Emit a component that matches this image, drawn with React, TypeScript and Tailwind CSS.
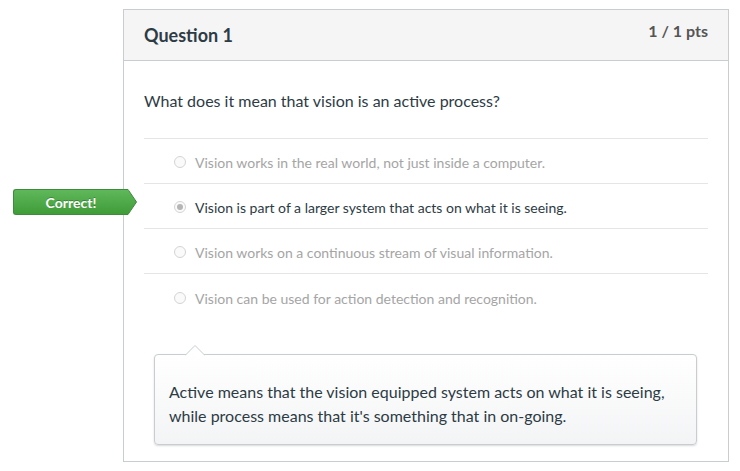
const answers = [
  { text: 'Vision works in the real world, not just inside a computer.', picked: false },
  { text: 'Vision is part of a larger system that acts on what it is seeing.', picked: true },
  { text: 'Vision works on a continuous stream of visual information.', picked: false },
  { text: 'Vision can be used for action detection and recognition.', picked: false },
]

function Radio({ checked }: { checked: boolean }) {
  return (
    <span className="flex h-[12px] w-[12px] shrink-0 items-center justify-center rounded-full border border-[#d4d4d4] bg-[#fafafa]">
      {checked && <span className="h-[6px] w-[6px] rounded-full bg-[#b5b5b5]" />}
    </span>
  )
}

function CorrectBadge() {
  return (
    <div className="absolute left-[-131px] top-[5px] flex h-[26px] items-center">
      <div className="flex h-full w-[115px] items-center justify-center rounded-l-[3px] border border-r-0 border-[#3d8b3d] bg-gradient-to-b from-[#5fb85a] to-[#3f9c38] text-[14px] font-bold text-white [text-shadow:0_-1px_0_rgba(0,0,0,0.25)]">
        Correct!
      </div>
      <svg width="10" height="26" viewBox="0 0 10 26" className="-ml-px">
        <defs>
          <linearGradient id="g" x1="0" y1="0" x2="0" y2="1">
            <stop offset="0" stopColor="#5fb85a" />
            <stop offset="1" stopColor="#3f9c38" />
          </linearGradient>
        </defs>
        <path d="M0 0.5 L1 0.5 L9.5 13 L1 25.5 L0 25.5 Z" fill="url(#g)" stroke="#3d8b3d" strokeWidth="1" />
        <rect x="0" y="1" width="1.5" height="24" fill="url(#g)" />
      </svg>
    </div>
  )
}

export default function App() {
  return (
    <div className="min-h-[471px] bg-white pl-[123px] pt-[9px] font-['Lato',sans-serif] text-[#2d3b45]">
      <div className="w-[606px] border border-[#c7cdd1]">
        <div className="flex h-[51px] items-start justify-between border-b border-[#c7cdd1] bg-[#f5f5f5] px-[20px] pt-[12px]">
          <h2 className="text-[18px] font-bold leading-[26px] text-[#2d3b45]">Question 1</h2>
          <span className="mt-[-3px] text-[16px] font-bold leading-[24px] text-[#555]">1 / 1 pts</span>
        </div>
        <div className="px-[20px] pb-[16px]">
          <p className="pt-[28px] pb-[25px] text-[16px] leading-[24px]">What does it mean that vision is an active process?</p>
          <div className="border-t border-[#e5e5e5]">
            {answers.map((a, i) => (
              <div
                key={i}
                className={`relative flex h-[45px] items-center gap-[9px] pl-[30px] pt-[2px] text-[14px] ${
                  i < answers.length - 1 ? 'border-b border-[#e5e5e5]' : ''
                } ${a.picked ? 'text-[#2d3b45]' : 'text-[#a5a5a5]'}`}
              >
                {a.picked && <CorrectBadge />}
                <Radio checked={a.picked} />
                <span className="pt-px">{a.text}</span>
              </div>
            ))}
          </div>
          <div className="relative ml-[10px] mr-[11px] mt-[35px] rounded-[4px] border border-[#c7cdd1] bg-gradient-to-b from-white to-[#f3f4f5] px-[14px] pt-[25px] pb-[16px] shadow-[0_1px_2px_rgba(0,0,0,0.15)]">
            <svg width="20" height="11" viewBox="0 0 20 11" className="absolute left-[30px] top-[-10px]">
              <path d="M0 10.5 L10 0.5 L20 10.5" fill="white" stroke="#c7cdd1" strokeWidth="1" />
              <rect x="1" y="10" width="18" height="2" fill="white" />
            </svg>
            <p className="text-[16px] leading-[24px] text-[#2d3b45]">
              Active means that the vision equipped system acts on what it is seeing,
              <br />
              while process means that it's something that in on-going.
            </p>
          </div>
        </div>
      </div>
    </div>
  )
}
